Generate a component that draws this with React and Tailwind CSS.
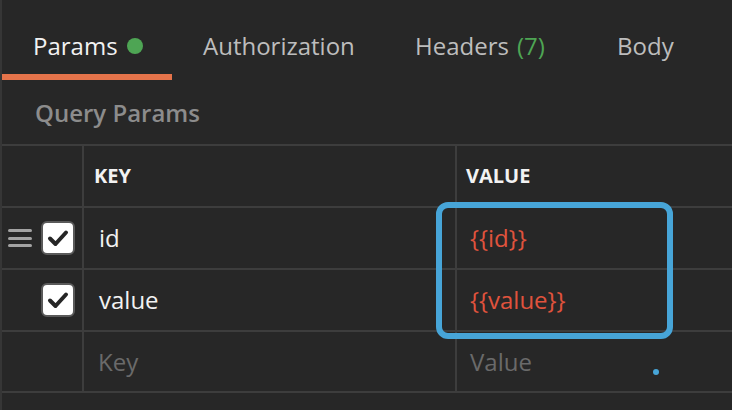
import React from 'react';

const tabs = [
    { label: 'Params', active: true, dot: true, width: 'w-[170px] pl-[31px]' },
    { label: 'Authorization', width: 'w-[212px] pl-[31px]' },
    { label: 'Headers', count: '(7)', width: 'w-[194px] pl-[31px]' },
    { label: 'Body', width: 'flex-1 pl-[39px]' },
];

const rows = [
    { key: 'id', value: '{{id}}', handle: true },
    { key: 'value', value: '{{value}}' },
];

function Checkbox() {
    return (
        <div className="w-[34px] h-[34px] rounded-[6px] bg-white border-2 border-[#5a5a5a] flex items-center justify-center">
            <svg width="24" height="24" viewBox="0 0 24 24" fill="none">
                <path d="M4 12.5 L9.5 18 L20 6.5" stroke="#262626" strokeWidth="4" strokeLinecap="round" strokeLinejoin="round" />
            </svg>
        </div>
    );
}

function Handle() {
    return (
        <div className="flex flex-col gap-[4.5px] w-[24px]">
            <div className="h-[3px] rounded-full bg-[#a3a3a3]" />
            <div className="h-[3px] rounded-full bg-[#a3a3a3]" />
            <div className="h-[3px] rounded-full bg-[#a3a3a3]" />
        </div>
    );
}

export default function App() {
    return (
        <div className="relative w-[732px] h-[410px] overflow-hidden bg-[#272727] border-l-2 border-[#363636] text-[24px]" style={{ fontFamily: '"Open Sans", sans-serif' }}>
            {/* Tabs */}
            <div className="flex h-[80px]">
                {tabs.map((tab) => (
                    <div
                        key={tab.label}
                        className={`flex items-start ${tab.width} pt-[30px] border-b-[6px] leading-[32px] ${tab.active ? 'border-[#e5734a] text-[#f2f2f2]' : 'border-transparent text-[#bdbdbd]'}`}
                    >
                        <span>{tab.label}</span>
                        {tab.dot && <span className="ml-[9px] mt-[8px] w-[16px] h-[16px] rounded-full bg-[#4ea554]" />}
                        {tab.count && <span className="ml-[8px] text-[#4ea554]">{tab.count}</span>}
                    </div>
                ))}
            </div>

            {/* Section title */}
            <div className="h-[64px] pl-[33px] pt-[17px] text-[24px] leading-[32px] font-semibold text-[#8c8c8c]">
                Query Params
            </div>

            {/* Table */}
            <div className="border-t-2 border-[#3d3d3d]">
                <div className="flex h-[62px] border-b-2 border-[#3d3d3d]">
                    <div className="w-[82px] border-r-2 border-[#3d3d3d]" />
                    <div className="w-[373px] pl-[10px] flex items-center border-r-2 border-[#3d3d3d] text-[20px] font-bold text-[#f2f2f2]">KEY</div>
                    <div className="flex-1 pl-[9px] flex items-center text-[20px] font-bold text-[#f2f2f2]">VALUE</div>
                </div>
                {rows.map((row) => (
                    <div key={row.key} className="flex h-[62px] border-b-2 border-[#3d3d3d]">
                        <div className="w-[82px] border-r-2 border-[#3d3d3d] flex items-center pl-[6px] gap-[9px]">
                            <div className="w-[24px]">{row.handle && <Handle />}</div>
                            <Checkbox />
                        </div>
                        <div className="w-[373px] pl-[15px] flex items-center border-r-2 border-[#3d3d3d] text-[#f2f2f2]">{row.key}</div>
                        <div className="flex-1 pl-[13px] flex items-center text-[#e0533d]">{row.value}</div>
                    </div>
                ))}
                <div className="flex h-[61px] border-b-2 border-[#3d3d3d]">
                    <div className="w-[82px] border-r-2 border-[#3d3d3d]" />
                    <div className="w-[373px] pl-[14px] flex items-center border-r-2 border-[#3d3d3d] text-[#6a6a6a]">Key</div>
                    <div className="flex-1 pl-[13px] flex items-center text-[#6a6a6a]">Value</div>
                </div>
            </div>

            {/* Highlight overlay */}
            <div className="absolute left-[434px] top-[202px] w-[237px] h-[137px] rounded-[12px] border-[6px] border-[#47a5d8]" />
            <div className="absolute left-[651px] top-[369px] w-[6px] h-[6px] rounded-full bg-[#47a5d8]" />
        </div>
    );
}
